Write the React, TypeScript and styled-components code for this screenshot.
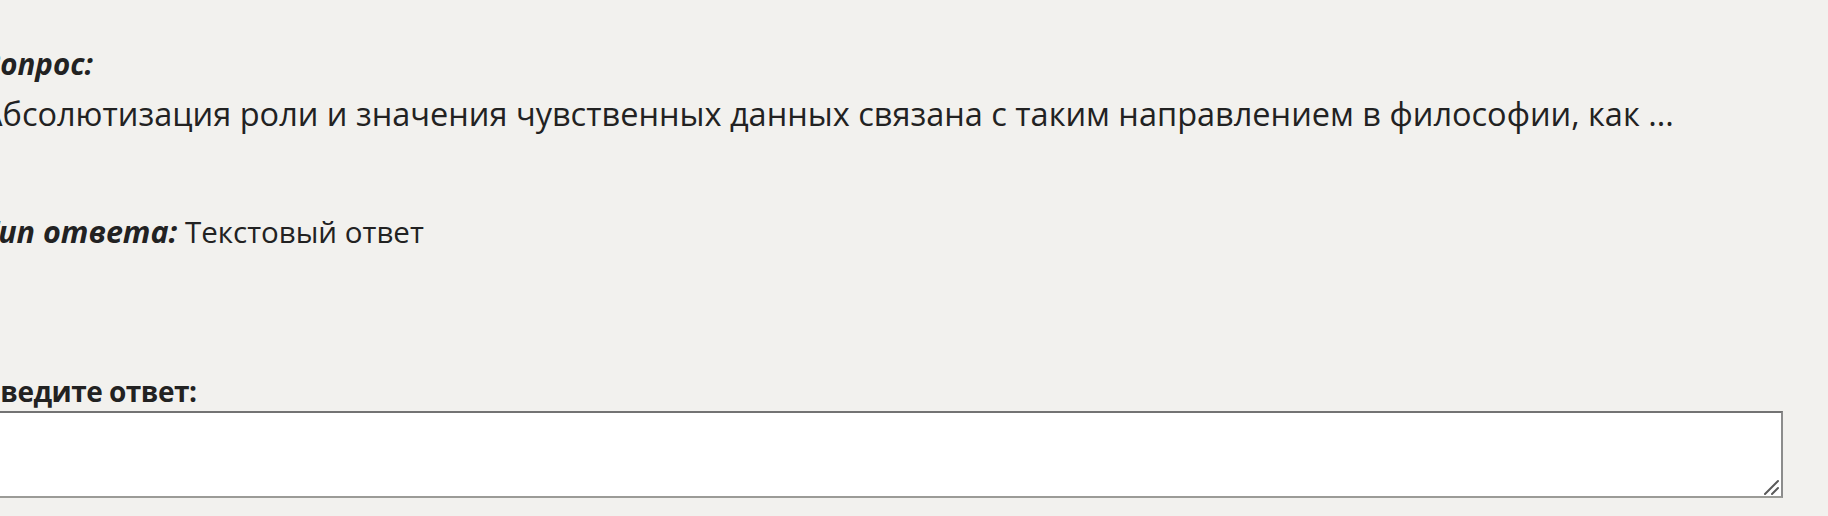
import React, { useState } from "react";
import styled, { createGlobalStyle } from "styled-components";

const GlobalStyle = createGlobalStyle`
  html, body {
    margin: 0;
    padding: 0;
    background: #f2f1ee;
  }
  body {
    font-family: "Open Sans", "Noto Sans", "Liberation Sans", sans-serif;
    color: #222222;
    overflow: hidden;
  }
`;

const Page = styled.main`
  width: 1801px;
  margin-left: -18px;
  padding-top: 44px;
  font-size: 28px;
  line-height: 40px;
`;

const Caption = styled.div<{ $italic?: boolean }>`
  font-weight: 700;
  font-style: ${p => (p.$italic ? "italic" : "normal")};
  font-size: ${p => (p.$italic ? "29.5px" : "28px")};
  letter-spacing: ${p => (p.$italic ? "0" : "-0.5px")};
`;

const QuestionText = styled.p`
  margin: 10px 0 0;
  font-size: 32.5px;
  white-space: nowrap;
`;

const TypeRow = styled.div`
  margin-top: 77px;
  font-size: 29.5px;
`;

const TypeLabel = styled.span`
  font-weight: 700;
  font-style: italic;
  font-size: 30.5px;
`;

const AnswerBlock = styled.section`
  margin-top: 119px;
`;

const FieldWrap = styled.div`
  position: relative;
`;

const AnswerField = styled.textarea`
  display: block;
  box-sizing: border-box;
  width: 100%;
  height: 87px;
  margin: 0;
  padding: 4px 6px;
  border-style: solid;
  border-width: 2px;
  border-color: #737373 #8c8c8c #9b9b97 #737373;
  background: #ffffff;
  font: inherit;
  resize: none;
  outline: none;
`;

const Grip = styled.svg`
  position: absolute;
  right: 4px;
  bottom: 3px;
  width: 16px;
  height: 16px;
  pointer-events: none;
`;

const App = () => {
  const [answer, setAnswer] = useState("");
  return (
    <>
      <GlobalStyle />
      <Page>
        <Caption $italic>Вопрос:</Caption>
        <QuestionText>
          Абсолютизация роли и значения чувственных данных связана с таким
          направлением в философии, как ...
        </QuestionText>
        <TypeRow>
          <TypeLabel>Тип ответа:</TypeLabel> Текстовый ответ
        </TypeRow>
        <AnswerBlock>
          <Caption>Введите ответ:</Caption>
          <FieldWrap>
            <AnswerField
              value={answer}
              onChange={e => setAnswer(e.target.value)}
            />
            <Grip viewBox="0 0 16 16">
              <path
                d="M2 15 L15 2 M9 15 L15 9"
                stroke="#5a5a5a"
                strokeWidth="2"
                strokeLinecap="round"
              />
            </Grip>
          </FieldWrap>
        </AnswerBlock>
      </Page>
    </>
  );
};

export default App;
